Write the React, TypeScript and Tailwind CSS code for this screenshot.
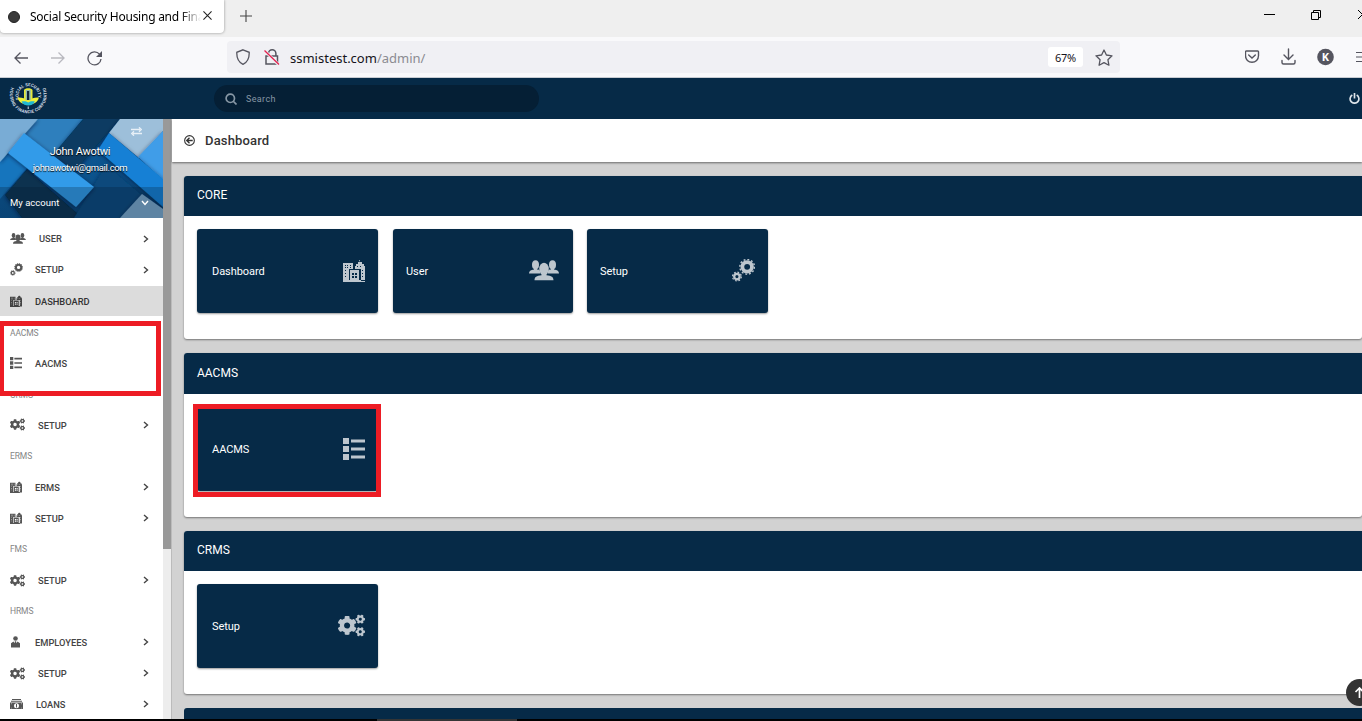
import React from "react";
import { FaCogs } from "react-icons/fa";

type IconProps = { className?: string };

const City = ({ className }: IconProps) => (
  <svg viewBox="0 0 22 22" className={className} fill="currentColor">
    <path
      fillRule="evenodd"
      d="M0 3h10v6H6v11h16v2H0zM2 5v1h1V5zm2 0v1h1V5zm3 0v1h1V5zM2 7v1h1V7zm2 0v1h1V7zm3 0v1h1V7zM2 10v1h1v-1zm0 3v1h1v-1zm0 3v1h1v-1zM16 0h1v2h2v2h2v2h1v15h-4V9h-6V6h1V4h2V2h2zM14 6v1h1V6zm3 0v1h1V6zm2 4v1h1v-1zm0 3v1h1v-1zm0 3v1h1v-1z"
    />
    <path fillRule="evenodd" d="M7 10h9v11H7zM9 13v2h2v-2zm3 0v2h2v-2zm-3 3v2h2v-2zm3 0v2h2v-2z" />
  </svg>
);

const Users = ({ className }: IconProps) => (
  <svg viewBox="0 0 30 21" className={className} fill="currentColor">
    <ellipse cx="6.500" cy="4.800" rx="3.500" ry="4.600" />
    <ellipse cx="23.500" cy="4.800" rx="3.500" ry="4.600" />
    <path d="M0 13.500c0-2.500 1.500-3.500 5-4V8h3v1.500c2 0 3 .6 3 2v2zM30 13.500c0-2.500-1.500-3.500-5-4V8h-3v1.500c-2 0-3 .6-3 2v2z" />
    <ellipse cx="15" cy="9" rx="4.800" ry="6.200" />
    <path d="M5.500 20.300c0-3.300 2-4.800 7-5.100V13h5v2.200c5 .3 7 1.800 7 5.100z" />
  </svg>
);

const Gears = ({ className }: IconProps) => (
  <svg viewBox="0 0 22 22" className={className} fill="none" stroke="currentColor">
    <circle cx="14.500" cy="7.500" r="4.600" strokeWidth="3.600" />
    <circle cx="14.500" cy="7.500" r="7" strokeWidth="1.400" strokeDasharray="1.830 1.830" />
    <circle cx="4.700" cy="16.800" r="2.600" strokeWidth="2.200" />
    <circle cx="4.700" cy="16.800" r="4.200" strokeWidth="1.200" strokeDasharray="1.650 1.650" />
  </svg>
);

const List = ({ className }: IconProps) => (
  <svg viewBox="0 0 22 22" className={className} fill="currentColor">
    <path d="M0 0h6v6H0zM8 1.500h14v3H8zM0 8h6v6H0zM8 9.500h14v3H8zM0 16h6v6H0zM8 17.500h14v3H8z" />
  </svg>
);

const Person = ({ className }: IconProps) => (
  <svg viewBox="0 0 10 12" className={className} fill="currentColor">
    <circle cx="5" cy="2.500" r="2.300" />
    <path d="M.5 11.500V7.300L3 5.500l2 3.500 2-3.500 2.500 1.800v4.200zM4.400 5.300h1.200l.5 2.700L5 9.500 3.900 8z" />
  </svg>
);

const Money = ({ className }: IconProps) => (
  <svg viewBox="0 0 13 10" className={className} fill="currentColor">
    <path d="M2 0h9v1H2zM1 1.700h11v1H1z" />
    <path
      fillRule="evenodd"
      d="M0 3.400h13V10H0zm6.500.8a2.500 2.500 0 1 0 0 5 2.500 2.500 0 0 0 0-5zM1 4.500v1l1-1zm11 0v1l-1-1zm-11 4v.7h1zm11 0v.7h-1z"
    />
    <path d="M6 5h1v3.400H6z" />
  </svg>
);

const Chevron = ({ className }: IconProps) => (
  <svg viewBox="0 0 6 8" className={className} fill="none" stroke="currentColor" strokeWidth="1.400">
    <path d="M1 1l3.500 3L1 7" />
  </svg>
);

const Logo = () => (
  <svg viewBox="0 0 38 34" className="h-[34px] w-[38px] overflow-visible">
    <defs>
      <path id="ring-top" d="M10.200 17.500A9.800 9.800 0 1 1 28.400 17.500" />
      <path id="ring-bottom" d="M2.300 5.500A18.500 18.500 0 1 0 36.300 5.500" />
    </defs>
    <text fill="#d3dde6" fontSize="4.300" fontWeight="700" fontFamily="Roboto, sans-serif">
      <textPath href="#ring-top" textLength="36">SOCIAL SECURITY</textPath>
      <textPath href="#ring-bottom" textLength="76">HOUSING FINANCIE CORPORATION</textPath>
    </text>
    <path d="M8.500 15.500c4-.3 7.500.5 10.700 3.500 3.200-3 6.700-3.800 10.700-3.500-1 4.700-5 7-10.700 7s-9.700-2.300-10.700-7z" fill="#eff23a" />
    <path d="M12.500 19.500c3-.4 5-.2 6.700 1 1.700-1.200 3.700-1.400 6.700-1-1.500 3-4 4-6.700 4s-5.200-1-6.700-4z" fill="#20b8d2" />
    <path d="M15 17V8c1-2.300 7.500-2.300 8.500 0v9l-4.250 3z" fill="#e4e83c" />
    <path d="M16.700 8h5v10h-5z" fill="#8fb9b0" />
    <path d="M18 9h2.200v9H18z" fill="#10243a" />
    <path d="M18.700 24.500h1v2.500h-1z" fill="#dbe5ee" />
  </svg>
);

const ProfileArt = () => (
  <svg viewBox="0 0 163 99" preserveAspectRatio="none" className="absolute inset-0 h-full w-full">
    <defs>
      <filter id="fold" x="-20%" y="-20%" width="140%" height="140%">
        <feDropShadow dx="0" dy="1" stdDeviation="2" floodColor="#00182c" floodOpacity=".6" />
      </filter>
      <linearGradient id="shade" x1="0" y1="0" x2="1" y2="1">
        <stop offset="0" stopColor="#0f64ac" />
        <stop offset="1" stopColor="#084574" />
      </linearGradient>
    </defs>
    <path fill="url(#shade)" d="M0 0h163v99H0z" />
    <path fill="#2d7fbd" filter="url(#fold)" d="M38 0h45L54 37 25 15z" />
    <path fill="#1675bd" d="M0 41l10-7 17 15L0 80z" />
    <path fill="#07304f" filter="url(#fold)" d="M27 50l52 46-3 3H22L5 76z" />
    <path fill="#073a62" filter="url(#fold)" d="M83 0h37L70 58 50 39z" />
    <path fill="#084a7c" filter="url(#fold)" d="M106 46l38 32-24 21H74z" />
    <path fill="#79acd5" filter="url(#fold)" d="M0 0h38L0 43z" />
    <path fill="#9dbfda" filter="url(#fold)" d="M120 0h43v12l-24 27-30-25z" />
    <path fill="#409de8" filter="url(#fold)" d="M163 12v49l-25-23z" />
    <path fill="#339be9" filter="url(#fold)" d="M24 14L94 68 76 88 8 34z" />
    <path fill="#1580d5" filter="url(#fold)" d="M109 14l54 46v28L98 31z" />
    <path fill="#7da8cb" filter="url(#fold)" d="M142 75l21 15v9h-43z" />
    <path fill="#03182b" fillOpacity=".25" d="M0 68h163v31H0z" />
  </svg>
);

type Entry = { label: string; icon?: React.ReactNode; heading?: boolean; active?: boolean; leaf?: boolean; low?: boolean };

const city = <City className="mr-[13px] h-3 w-3" />;
const cogs = <FaCogs className="mr-[13px] h-[13px] w-[15px]" />;

const entries: Entry[] = [
  { label: "USER", icon: <Users className="mr-[13px] h-[11px] w-4" /> },
  { label: "SETUP", icon: <Gears className="mr-3 h-[13px] w-[13px]" /> },
  { label: "DASHBOARD", icon: city, active: true, leaf: true, low: true },
  { label: "AACMS", heading: true, low: true },
  { label: "AACMS", icon: <List className="mr-[13px] h-3 w-3" />, leaf: true, low: true },
  { label: "CRMS", heading: true, low: true },
  { label: "SETUP", icon: cogs, low: true },
  { label: "ERMS", heading: true },
  { label: "ERMS", icon: city },
  { label: "SETUP", icon: city },
  { label: "FMS", heading: true },
  { label: "SETUP", icon: cogs },
  { label: "HRMS", heading: true },
  { label: "EMPLOYEES", icon: <Person className="mr-[14px] h-3 w-[11px]" /> },
  { label: "SETUP", icon: cogs },
  { label: "LOANS", icon: <Money className="mr-[13px] h-[10px] w-[13px]" /> },
];

const Row = ({ entry }: { entry: Entry }) =>
  entry.heading ? (
    <div
      className={`flex h-[31.07px] shrink-0 items-center pl-[10px] text-[8.500px] tracking-[-0.1px] text-[#858585] ${
        entry.low ? "pt-[4px]" : "pt-0"
      }`}
    >
      {entry.label}
    </div>
  ) : (
    <div className="h-[31.07px] shrink-0 pt-px">
      <div
        className={`flex h-[30px] items-center pr-[14px] pl-[10px] text-[9.300px] font-medium ${
          entry.active ? "bg-[#dcdcdc] text-[#333]" : "text-[#444]"
        }`}
      >
        <span className="mb-px flex opacity-90">{entry.icon}</span>
        <span className={`flex-1 ${entry.low ? "pt-[2px]" : "pt-0"}`}>{entry.label}</span>
        {!entry.leaf && <Chevron className="mb-px h-2 w-[6px] text-[#444]" />}
      </div>
    </div>
  );

const Card = ({ label, icon, className }: { label: string; icon: React.ReactNode; className: string }) => (
  <div
    className={`flex h-[84px] items-center justify-between rounded-[3px] bg-[#062a47] text-[11px] text-white shadow-[0_1px_2px_rgba(0,0,0,0.4)] ${className}`}
  >
    <span className="pt-[3px] tracking-[-0.05px]">{label}</span>
    <span className="pb-px text-[#bdc6ce]">{icon}</span>
  </div>
);

const Section = ({ title, className, head, children }: { title: string; className: string; head: string; children?: React.ReactNode }) => (
  <section className={`shrink-0 rounded-[3px] bg-white shadow-[0_1px_2px_rgba(0,0,0,0.45)] ${className}`}>
    <h2 className={`flex items-center rounded-tl-[3px] bg-[#062a47] pb-[2px] pl-[13px] text-[12px] text-white ${head}`}>{title}</h2>
    <div className="flex pt-[13px] pl-[13px]">{children}</div>
  </section>
);

const TabStrip = () => (
  <div className="flex h-[37px] shrink-0 items-start bg-[#efefef] text-black">
    <div className="flex h-[33px] w-[224px] items-center rounded-b-[4px] bg-white pl-2 shadow-[0_0_3px_rgba(0,0,0,0.4)]">
      <span className="mt-px size-3 rounded-full border border-[#222] bg-[#3a3a3a]" />
      <span className="ml-[10px] w-[171px] overflow-hidden bg-linear-to-r from-black from-88% to-transparent bg-clip-text font-['Noto_Sans',sans-serif] text-[12px] tracking-[-0.250px] whitespace-nowrap text-transparent">
        Social Security Housing and Fina
      </span>
      <svg viewBox="0 0 10 10" className="mb-[2px] ml-[2px] size-[9px]" stroke="#222" strokeWidth="1.200">
        <path d="M.5.5l9 9m0-9l-9 9" />
      </svg>
    </div>
    <svg viewBox="0 0 12 12" className="mt-[10px] ml-4 size-3" stroke="#444" strokeWidth="1.100">
      <path d="M6 0v12M0 6h12" />
    </svg>
    <svg viewBox="0 0 98 12" className="mt-[9px] ml-auto h-3 w-[98px]" fill="none" stroke="#000">
      <path d="M0 5.500h11M47.500 3.500h7v7h-7zM49.500 3.500v-2h7v7h-2M94 1l9 9m0-9l-9 9" />
    </svg>
  </div>
);

const Toolbar = () => (
  <div className="flex h-[41px] shrink-0 items-center border-b border-[#c8ccd2] bg-[#f9f9fb] text-[#55555f]">
    <svg viewBox="0 0 90 16" className="mt-px ml-[14px] h-4 w-[90px]" fill="none" stroke="currentColor" strokeWidth="1.300">
      <path d="M14 8H1M6.500 2.500L1 8l5.500 5.500" />
      <path stroke="#b9b9bf" d="M37 8h13M44.500 2.500L50 8l-5.500 5.500" />
      <path d="M85.500 4.200A6.500 6.500 0 1 0 87 9" />
      <path fill="currentColor" stroke="none" d="M88 1v6h-6z" />
    </svg>
    <div className="ml-[123px] flex h-8 w-[893px] items-center rounded-[4px] bg-[#f0f0f4] pl-[9px]">
      <svg viewBox="0 0 14 16" className="h-4 w-[14px]" fill="none" stroke="currentColor" strokeWidth="1.300">
        <path d="M7 .8l6.200 2.500c.2 5-1.200 9.600-6.200 12C2 12.900.6 8.300.8 3.300z" />
      </svg>
      <svg viewBox="0 0 16 16" className="ml-[14px] size-4" fill="none" stroke="currentColor" strokeWidth="1.500">
        <path d="M4.500 7V4.500a3.700 3.700 0 0 1 7.400 0V7M2 7h11.500v8H2z" />
        <path stroke="#f0f0f4" strokeWidth="3" d="M1 2l14 14" />
        <path stroke="#e3214f" strokeWidth="1.300" d="M.5 1.500l14.500 14" />
      </svg>
      <span className="ml-[10px] flex-1 pt-[3px] font-['Noto_Sans',sans-serif] text-[13px] text-[#8b8b91]">
        <span className="text-[#15141a]">ssmistest.com</span>/admin/
      </span>
      <span className="flex h-5 w-[35px] items-center justify-center rounded-[3px] bg-white pt-[2px] font-['Noto_Sans',sans-serif] text-[11px] tracking-[-0.2px] text-[#15141a]">
        67%
      </span>
      <svg viewBox="0 0 18 17" className="mr-[7px] ml-3 h-[17px] w-[18px]" fill="none" stroke="currentColor" strokeWidth="1.300" strokeLinejoin="round">
        <path d="M9 1l2.400 5 5.600.8-4.100 3.900 1 5.500L9 13.600l-4.900 2.600 1-5.500L1 6.800 6.600 6z" />
      </svg>
    </div>
    <svg viewBox="0 0 117 18" className="ml-auto h-[18px] w-[117px]" fill="none" stroke="currentColor" strokeWidth="1.400">
      <path d="M1.500 3h11.200c.5 0 .8.300.8.800v4a6.500 6.500 0 0 1-13 0v-4c0-.5.300-.8 1-.8z" />
      <path strokeLinecap="round" d="M3.700 7L7 10l3.300-3M43.500 1v10M39 7l4.500 4.500L48 7M37 12.500v2c0 1 .5 1.500 1.500 1.500h10c1 0 1.500-.5 1.500-1.500v-2" />
      <circle cx="80.500" cy="9" r="8.300" fill="currentColor" stroke="none" />
      <text x="80.500" y="13" textAnchor="middle" fill="#fff" stroke="none" fontSize="11" fontWeight="700" fontFamily="Noto Sans, sans-serif">K</text>
      <path strokeWidth="1.200" d="M111 4.500h12M111 9h12M111 13.500h12" />
    </svg>
  </div>
);

const Header = () => (
  <header className="flex h-[41px] shrink-0 items-center bg-[#062a47]">
    <div className="ml-[9px] w-[205px]">
      <Logo />
    </div>
    <div className="flex h-[27px] w-[325px] items-center rounded-full bg-[#051f35] pl-[11px] text-[9px] tracking-[0.35px] text-[#8797a5]">
      <svg viewBox="0 0 12 12" className="mr-[9px] size-3" fill="none" stroke="currentColor" strokeWidth="1.700">
        <circle cx="5.300" cy="5.300" r="4.200" />
        <path d="M8 8l3.500 3.500" />
      </svg>
      <span className="pt-[2px]">Search</span>
    </div>
    <svg viewBox="0 0 10 10" className="mr-[2px] ml-auto size-[11px]" fill="none" stroke="#dde4ea" strokeWidth="1.500">
      <path d="M3 1.800a4 4 0 1 0 4 0M5 0v5" />
    </svg>
  </header>
);

export default function App() {
  return (
    <div className="relative flex h-[721px] w-[1362px] flex-col overflow-hidden bg-white font-[Roboto,sans-serif] leading-normal">
      <TabStrip />
      <Toolbar />
      <Header />
      <div className="flex h-[600px] shrink-0 overflow-hidden">
        <aside className="flex w-[163px] shrink-0 flex-col overflow-hidden bg-white">
          <div className="relative h-[99px] shrink-0 overflow-hidden text-white">
            <ProfileArt />
            <div className="relative flex h-full flex-col">
              <svg viewBox="0 0 11 9" className="mt-2 ml-[131px] h-[9px] w-[11px] shrink-0" fill="none" stroke="#e8f0f7" strokeWidth="1.300">
                <path d="M0 2.500h9M8 .3l2.300 2.200L8 4.700M11 6.500H2M3 4.300L.7 6.500 3 8.700" />
              </svg>
              <div className="mt-2 h-4 pr-[3px] text-center text-[11px] leading-4 tracking-[-0.250px] [text-shadow:0_1px_1px_#000]">John Awotwi</div>
              <div className="h-4 pr-[3px] text-center text-[9.500px] leading-4 tracking-[-0.350px] [text-shadow:0_1px_1px_#000]">johnawotwi@gmail.com</div>
              <div className="mt-auto flex h-[31px] items-center justify-between pr-[15px] pl-[10px] text-[9.500px]">
                <span className="pt-[2px]">My account</span>
                <Chevron className="h-2 w-[6px] rotate-90" />
              </div>
            </div>
          </div>
          <nav className="flex flex-col pt-[5px]">
            {entries.map((entry, i) => (
              <Row key={i} entry={entry} />
            ))}
          </nav>
        </aside>
        <div className="w-2 shrink-0 bg-[#ededed]">
          <div className="h-[430px] bg-[#999]" />
        </div>
        <main className="flex min-w-0 flex-1 flex-col border-l border-[#bbb] bg-[#d2d2d2]">
          <div className="flex h-[43px] shrink-0 items-center bg-white pl-3 text-[13px] font-medium tracking-[0.150px] text-[#333] shadow-[0_1px_2px_rgba(0,0,0,0.5)]">
            <svg viewBox="0 0 12 12" className="mr-[10px] size-[11px]" fill="none" stroke="currentColor" strokeWidth="1.200">
              <circle cx="6" cy="6" r="5.300" />
              <path strokeWidth="1.500" d="M9.500 6h-6M6 3L3 6l3 3" />
            </svg>
            Dashboard
          </div>
          <div className="flex flex-col gap-[14px] pt-[14px] pl-3">
            <Section title="CORE" className="h-[163px]" head="h-10">
              <Card label="Dashboard" className="w-[181px] pr-[13px] pl-[15px]" icon={<City className="size-[22px]" />} />
              <Card label="User" className="ml-[15px] w-[180px] pr-[14px] pl-[13px]" icon={<Users className="h-[21px] w-[30px]" />} />
              <Card label="Setup" className="ml-[14px] w-[181px] pr-[13px] pl-[13px]" icon={<Gears className="size-[23px]" />} />
            </Section>
            <Section title="AACMS" className="h-[164px]" head="h-[41px]">
              <Card label="AACMS" className="w-[181px] pr-[13px] pl-[15px]" icon={<List className="size-[22px]" />} />
            </Section>
            <Section title="CRMS" className="h-[163px]" head="h-10">
              <Card label="Setup" className="w-[181px] pr-[13px] pl-[15px]" icon={<FaCogs className="h-[23px] w-[27px]" />} />
            </Section>
            <div className="h-4 shrink-0 rounded-tl-[3px] bg-[#062a47]" />
          </div>
        </main>
      </div>
      <div className="flex h-[2px] shrink-0 bg-black pl-[377px]">
        <div className="w-[140px] bg-[#353535]" />
      </div>

      <div className="absolute top-[321px] left-0 h-[75px] w-[161px] border-[5px] border-l-4 border-[#ed1c24]" />
      <div className="absolute top-[404px] left-[193px] h-[93px] w-[188px] border-[5px] border-[#ed1c24]" />
      <div className="absolute top-[679px] left-[1346px] flex size-[27px] items-center rounded-full bg-[#333] pl-2">
        <svg viewBox="0 0 11 11" className="size-[11px]" fill="none" stroke="#fff" strokeWidth="1.700">
          <path d="M5.500 11V1M1.500 5l4-4 4 4" />
        </svg>
      </div>
    </div>
  );
}
